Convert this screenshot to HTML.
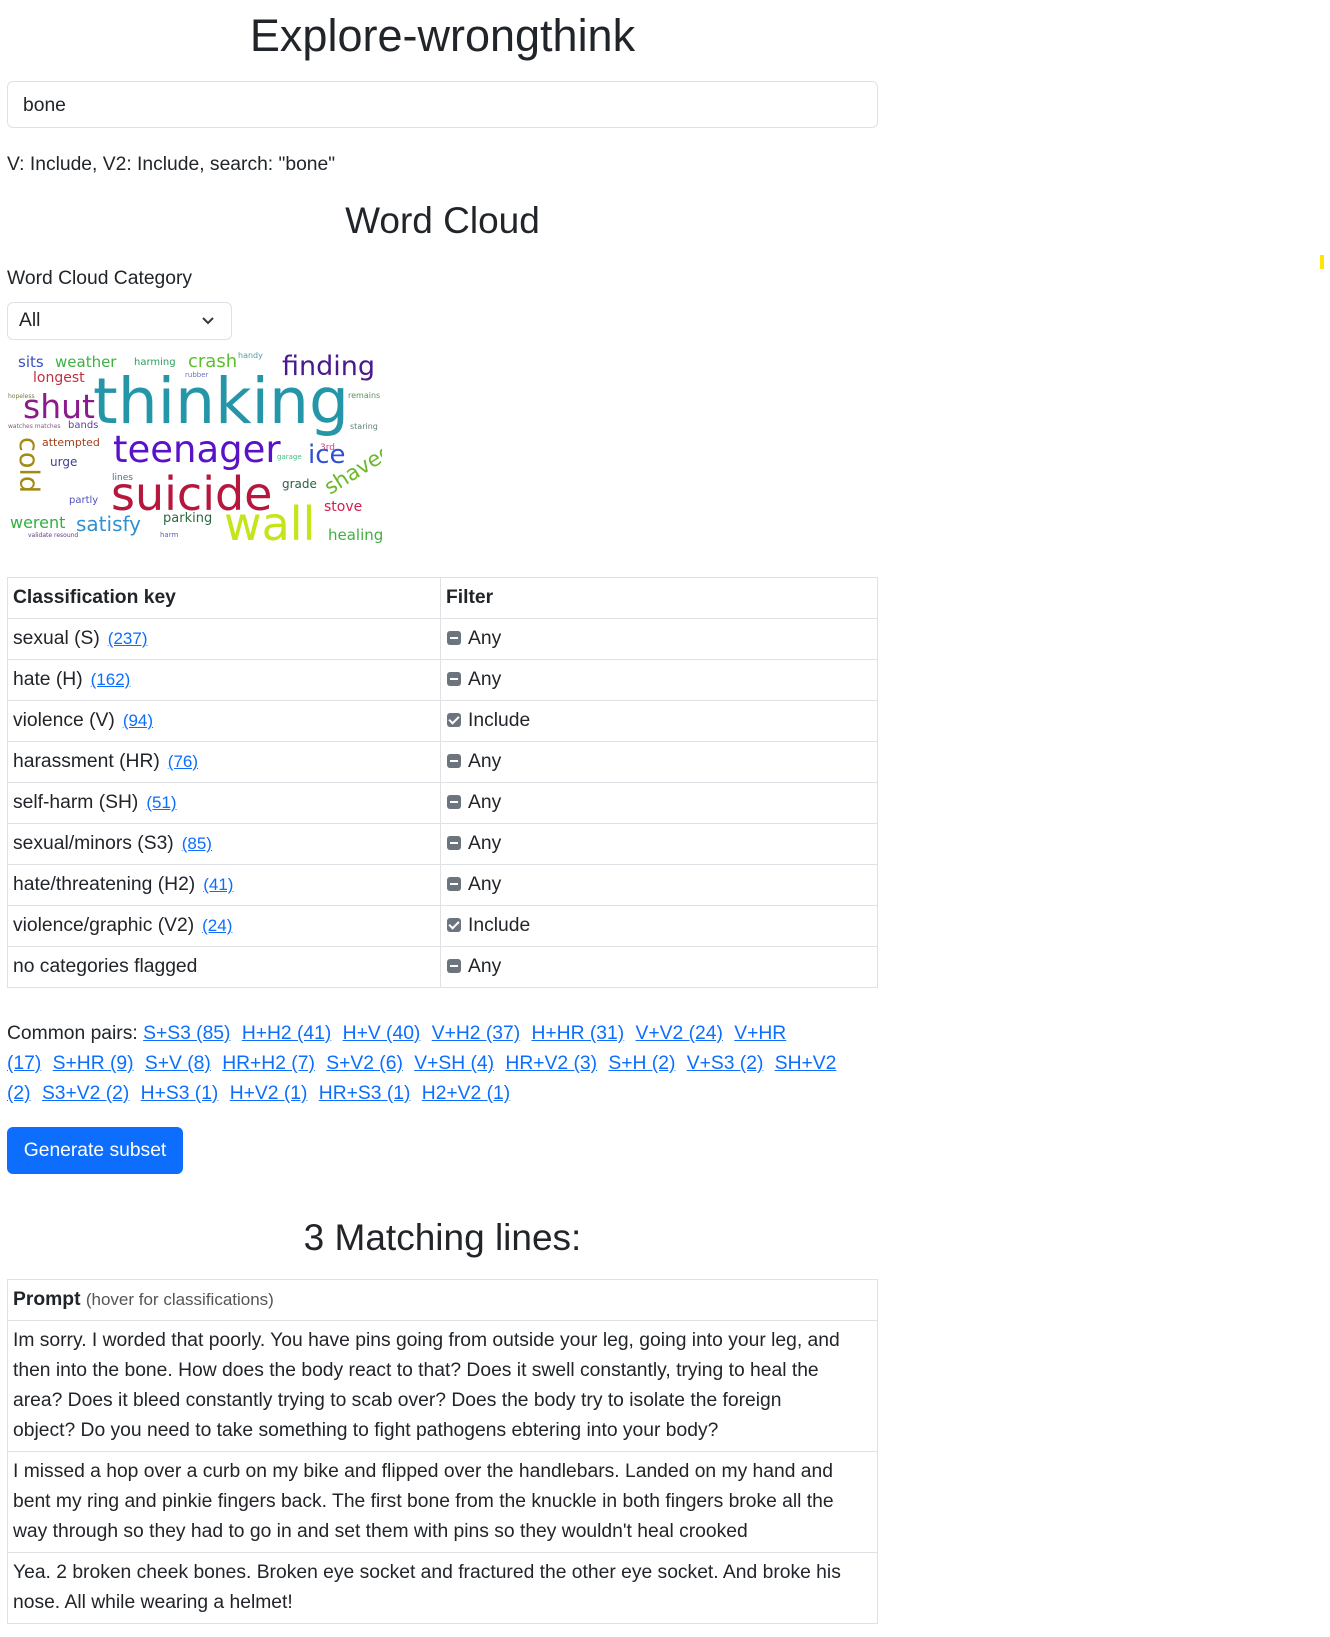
<!DOCTYPE html>
<html><head><meta charset="utf-8">
<style>
html,body{margin:0;padding:0;background:#fff;}
body{width:1330px;height:1637px;position:relative;overflow:hidden;font-family:"Liberation Sans",Arial,sans-serif;color:#212529;font-size:19.3px;line-height:30px;}
.c{position:absolute;left:7px;width:871px;}
h1,h2{margin:0;font-weight:400;text-align:center;position:absolute;left:7px;width:871px;}
a{color:#0d6efd;text-decoration:underline;}
table{border-collapse:collapse;width:871px;position:absolute;left:7px;}
td,th{border:1px solid #dee2e6;padding:5px 5px;text-align:left;vertical-align:top;}
.k td,.k th{height:30px;}
th{font-weight:700;}
.sm{font-size:17px;margin-left:8px;}
.ic{display:inline-block;width:14px;height:14px;background:#6c757d;border-radius:3px;position:relative;top:1px;margin-right:7px;margin-left:1px;}
.ic.m:after{content:"";position:absolute;left:3px;right:3px;top:6px;height:2px;background:#fff;}
.ic.ch:after{content:"";position:absolute;left:4px;top:1px;width:4px;height:8px;border:solid #fff;border-width:0 2px 2px 0;transform:rotate(45deg);}
.pairs a{margin-right:6px;}
</style></head><body>
<h1 style="top:8px;font-size:45px;line-height:56px;">Explore-wrongthink</h1>
<div style="position:absolute;left:7px;top:81px;width:869px;height:45px;border:1px solid #dee2e6;border-radius:6px;"><span style="position:absolute;left:15px;top:9px;">bone</span></div>
<div class="c" style="top:150px;">V: Include, V2: Include, search: "bone"</div>
<h2 style="top:198px;font-size:37px;line-height:46px;">Word Cloud</h2>
<div class="c" style="top:264px;">Word Cloud Category</div>
<div style="position:absolute;left:7px;top:302px;width:223px;height:36px;border:1px solid #dee2e6;border-radius:6px;">
<span style="position:absolute;left:11px;top:3px;">All</span>
<svg style="position:absolute;right:16px;top:13px" width="14" height="10" viewBox="0 0 14 10"><path d="M2 2l5 5 5-5" fill="none" stroke="#343a40" stroke-width="2"/></svg>
</div>
<svg style="position:absolute;left:0;top:0" width="382" height="545" viewBox="0 0 382 545" font-family="DejaVu Sans, sans-serif">
<text x="93" y="423" font-size="63" fill="#2596a8">thinking</text>
<text x="113" y="462" font-size="37" fill="#5a12c8">teenager</text>
<text x="111" y="510" font-size="46" fill="#b5173d">suicide</text>
<text x="224" y="540" font-size="46" fill="#c5e41a">wall</text>
<text x="282" y="375" font-size="27" fill="#4a1a8c">finding</text>
<text x="23" y="418" font-size="33" fill="#8b1a8b">shut</text>
<text x="18" y="367" font-size="15" fill="#3a4fc0">sits</text>
<text x="55" y="367" font-size="15" fill="#3cb043">weather</text>
<text x="134" y="365" font-size="10" fill="#2aa060">harming</text>
<text x="188" y="367" font-size="18" fill="#5cc02a">crash</text>
<text x="238" y="358" font-size="8" fill="#5a9aa0">handy</text>
<text x="185" y="377" font-size="7" fill="#7070c0">rubber</text>
<text x="33" y="382" font-size="14" fill="#c03040">longest</text>
<text x="68" y="428" font-size="10" fill="#6040a0">bands</text>
<text x="8" y="428" font-size="6" fill="#806080">watches matches</text>
<text x="42" y="446" font-size="11" fill="#a0401a">attempted</text>
<text x="0" y="0" font-size="27" fill="#a08a10" transform="translate(20,437) rotate(90)">cold</text>
<text x="50" y="466" font-size="12" fill="#404090">urge</text>
<text x="308" y="463" font-size="26" fill="#3050d0">ice</text>
<text x="320" y="450" font-size="9" fill="#d04080">3rd</text>
<text x="277" y="459" font-size="7" fill="#40c080">garage</text>
<text x="0" y="0" font-size="21" fill="#6cb82a" transform="translate(330,495) rotate(-32)">shaved</text>
<text x="282" y="488" font-size="12" fill="#2a6040">grade</text>
<text x="324" y="511" font-size="14" fill="#d02050">stove</text>
<text x="10" y="528" font-size="16" fill="#30b040">werent</text>
<text x="76" y="531" font-size="20" fill="#3090d0">satisfy</text>
<text x="163" y="522" font-size="13" fill="#2a6a40">parking</text>
<text x="69" y="503" font-size="10" fill="#5050c0">partly</text>
<text x="112" y="480" font-size="9" fill="#507080">lines</text>
<text x="328" y="540" font-size="15" fill="#40b040">healing</text>
<text x="348" y="398" font-size="8" fill="#609060">remains</text>
<text x="350" y="429" font-size="8" fill="#608070">staring</text>
<text x="8" y="398" font-size="6" fill="#708040">hopeless</text>
<text x="160" y="537" font-size="7" fill="#6060c0">harm</text>
<text x="28" y="537" font-size="6" fill="#604080">validate resound</text>
</svg>
<table class="k" style="top:577px;">
<tr><th style="width:422px">Classification key</th><th>Filter</th></tr>
<tr><td>sexual (S)<a class="sm" href="#">(237)</a></td><td><span class="ic m"></span>Any</td></tr>
<tr><td>hate (H)<a class="sm" href="#">(162)</a></td><td><span class="ic m"></span>Any</td></tr>
<tr><td>violence (V)<a class="sm" href="#">(94)</a></td><td><span class="ic ch"></span>Include</td></tr>
<tr><td>harassment (HR)<a class="sm" href="#">(76)</a></td><td><span class="ic m"></span>Any</td></tr>
<tr><td>self-harm (SH)<a class="sm" href="#">(51)</a></td><td><span class="ic m"></span>Any</td></tr>
<tr><td>sexual/minors (S3)<a class="sm" href="#">(85)</a></td><td><span class="ic m"></span>Any</td></tr>
<tr><td>hate/threatening (H2)<a class="sm" href="#">(41)</a></td><td><span class="ic m"></span>Any</td></tr>
<tr><td>violence/graphic (V2)<a class="sm" href="#">(24)</a></td><td><span class="ic ch"></span>Include</td></tr>
<tr><td>no categories flagged</td><td><span class="ic m"></span>Any</td></tr>
</table>
<div class="c pairs" style="top:1019px;white-space:nowrap;">Common pairs: <a href="#">S+S3 (85)</a> <a href="#">H+H2 (41)</a> <a href="#">H+V (40)</a> <a href="#">V+H2 (37)</a> <a href="#">H+HR (31)</a> <a href="#">V+V2 (24)</a> <a href="#">V+HR</a><br><a href="#">(17)</a> <a href="#">S+HR (9)</a> <a href="#">S+V (8)</a> <a href="#">HR+H2 (7)</a> <a href="#">S+V2 (6)</a> <a href="#">V+SH (4)</a> <a href="#">HR+V2 (3)</a> <a href="#">S+H (2)</a> <a href="#">V+S3 (2)</a> <a href="#">SH+V2</a><br><a href="#">(2)</a> <a href="#">S3+V2 (2)</a> <a href="#">H+S3 (1)</a> <a href="#">H+V2 (1)</a> <a href="#">HR+S3 (1)</a> <a href="#">H2+V2 (1)</a></div>
<div style="position:absolute;left:7px;top:1127px;width:176px;height:47px;background:#0d6efd;border-radius:6px;color:#fff;text-align:center;line-height:47px;">Generate subset</div>
<h2 style="top:1215px;font-size:37px;line-height:46px;">3 Matching lines:</h2>
<table style="top:1279px;white-space:nowrap;">
<tr><td style="height:30px"><b>Prompt</b> <span style="font-size:17px;color:#555">(hover for classifications)</span></td></tr>
<tr><td>Im sorry. I worded that poorly. You have pins going from outside your leg, going into your leg, and<br>then into the bone. How does the body react to that? Does it swell constantly, trying to heal the<br>area? Does it bleed constantly trying to scab over? Does the body try to isolate the foreign<br>object? Do you need to take something to fight pathogens ebtering into your body?</td></tr>
<tr><td>I missed a hop over a curb on my bike and flipped over the handlebars. Landed on my hand and<br>bent my ring and pinkie fingers back. The first bone from the knuckle in both fingers broke all the<br>way through so they had to go in and set them with pins so they wouldn't heal crooked</td></tr>
<tr><td>Yea. 2 broken cheek bones. Broken eye socket and fractured the other eye socket. And broke his<br>nose. All while wearing a helmet!</td></tr>
</table>
<div style="position:absolute;left:1320px;top:255px;width:4px;height:14px;background:#ffe500;"></div>
</body></html>
